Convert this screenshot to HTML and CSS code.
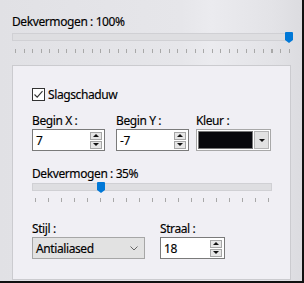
FILE: index.html
```html
<!DOCTYPE html>
<html lang="nl">
<head>
  <meta charset="UTF-8">
  <meta name="viewport" content="width=device-width, initial-scale=1.0">
  <title>Slagschaduw</title>
  <link rel="stylesheet" href="styles.css">
</head>
<body>

  <div class="window">

    <!-- Layer opacity -->
    <div class="top">
      <div class="label">Dekvermogen : 100%</div>
      <div class="slider slider-main">
        <div class="track"></div>
        <div class="thumb" style="left: 273px;"></div>
        <div class="ticks"></div>
      </div>
    </div>

    <!-- Drop shadow group -->
    <div class="panel">
      <label class="check">
        <span class="box">
          <svg width="11" height="11" viewBox="0 0 11 11"><path d="M1.5 5.5 L4.2 8.2 L9.5 2.2" fill="none" stroke="#333" stroke-width="1.1"/></svg>
        </span>
        Slagschaduw
      </label>

      <div class="row">
        <div class="field field-x">
          <div class="label">Begin X :</div>
          <div class="spin spin-wide">
            <span class="value">7</span>
            <span class="arrows"><span class="arrow up"></span><span class="arrow down"></span></span>
          </div>
        </div>
        <div class="field field-y">
          <div class="label">Begin Y :</div>
          <div class="spin spin-wide">
            <span class="value">-7</span>
            <span class="arrows"><span class="arrow up"></span><span class="arrow down"></span></span>
          </div>
        </div>
        <div class="field">
          <div class="label">Kleur :</div>
          <div class="color-combo">
            <span class="swatch"></span>
            <span class="combo-btn"></span>
          </div>
        </div>
      </div>

      <div class="label label-opacity">Dekvermogen : 35%</div>
      <div class="slider slider-inner">
        <div class="track"></div>
        <div class="thumb" style="left: 65px;"></div>
        <div class="ticks"></div>
      </div>

      <div class="row row-bottom">
        <div class="field field-style">
          <div class="label">Stijl :</div>
          <div class="select">
            <span class="value">Antialiased</span>
            <svg width="8" height="5" viewBox="0 0 8 5"><path d="M0.5 0.5 L4 4 L7.5 0.5" fill="none" stroke="#666" stroke-width="1"/></svg>
          </div>
        </div>
        <div class="field">
          <div class="label">Straal :</div>
          <div class="spin spin-small">
            <span class="value">18</span>
            <span class="arrows"><span class="arrow up"></span><span class="arrow down"></span></span>
          </div>
        </div>
      </div>
    </div>

  </div>

</body>
</html>
```

FILE: styles.css
```css
body {
  margin: 0;
  font-family: "Noto Sans", "Open Sans", sans-serif;
  font-size: 12px;
  letter-spacing: -0.4px;
  color: #000;
  -webkit-text-stroke: 0.15px #000;
  background: #e4e4e8;
}
.window {
  width: 304px;
  height: 283px;
  box-sizing: border-box;
  border-right: 2px solid #111;
  border-bottom: 2px solid #111;
  background: linear-gradient(90deg, #e1e1e5 0%, #e6e6ea 60%, #ebebef 70%, #e3e3e7 90%, #dcdce0 100%);
  overflow: hidden;
}
.label {
  line-height: 16px;
  height: 16px;
}
.top {
  padding: 14px 0 0 12px;
}
/* Slider */
.slider {
  position: relative;
}
.track {
  height: 6px;
  border: 1px solid #d0d0d4;
  background: #dedee1;
}
.ticks {
  height: 4px;
  background: repeating-linear-gradient(90deg, #a8a8a8 0, #a8a8a8 1px, transparent 1px, transparent 8.55px);
}
.thumb {
  position: absolute;
  top: -1px;
  width: 8px;
  height: 8px;
  background: #0078d7;
  border-radius: 1px 1px 0 0;
}
.thumb::after {
  content: "";
  position: absolute;
  left: 0;
  top: 8px;
  border-left: 4px solid transparent;
  border-right: 4px solid transparent;
  border-top: 3px solid #0078d7;
}
.slider-main {
  width: 278px;
  margin-top: 3px;
}
.slider-main .ticks {
  margin: 8px 0 0 3px;
  width: 275px;
}
.slider-inner {
  width: 240px;
  margin-top: 1px;
}
.slider-inner .ticks {
  margin: 7px 0 0 3px;
  width: 234px;
  background: repeating-linear-gradient(90deg, #a8a8a8 0, #a8a8a8 1px, transparent 1px, transparent 12.96px);
}
/* Group panel */
.panel {
  margin: 12px 0 0 12px;
  width: 279px;
  height: 215px;
  box-sizing: border-box;
  border: 1px solid #cbcbcf;
  background: #f0eff4;
  padding: 22px 0 0 19px;
}
.check {
  display: flex;
  align-items: center;
  gap: 3px;
  height: 13px;
}
.box {
  width: 11px;
  height: 11px;
  border: 1px solid #333;
  background: #fff;
  display: flex;
}
.row {
  display: flex;
  margin-top: 12px;
}
.field-x {
  width: 84px;
}
.field-y {
  width: 80px;
}
.label-opacity {
  margin-top: 15px;
}
.row-bottom {
  margin-top: 19px;
}
.field-style {
  width: 128px;
}
/* Spin box */
.spin {
  height: 22px;
  box-sizing: border-box;
  border: 1px solid #7a7a7a;
  background: #fff;
  display: flex;
  align-items: center;
  justify-content: space-between;
  padding: 0 2px 0 3px;
}
.spin-wide {
  width: 73px;
}
.spin-small {
  width: 65px;
}
.arrows {
  display: flex;
  flex-direction: column;
  gap: 1px;
}
.arrow {
  width: 12px;
  height: 8px;
  box-sizing: border-box;
  border: 1px solid #a6a6a6;
  background: #e6e6e6;
  display: flex;
  align-items: center;
  justify-content: center;
}
.arrow::before {
  content: "";
  border-left: 3px solid transparent;
  border-right: 3px solid transparent;
}
.arrow.up::before {
  border-bottom: 3px solid #111;
}
.arrow.down::before {
  border-top: 3px solid #111;
}
/* Colour combo */
.color-combo {
  width: 75px;
  height: 22px;
  box-sizing: border-box;
  border: 1px solid #a8a8a8;
  background: #fff;
  display: flex;
  align-items: center;
  gap: 1px;
  padding: 1px;
}
.swatch {
  width: 56px;
  height: 18px;
  box-sizing: border-box;
  border: 1px solid #777;
  background: #09090d;
}
.combo-btn {
  width: 15px;
  height: 18px;
  box-sizing: border-box;
  border: 1px solid #b4b4b4;
  background: #e2e2e2;
  display: flex;
  align-items: center;
  justify-content: center;
}
.combo-btn::before {
  content: "";
  border-left: 3px solid transparent;
  border-right: 3px solid transparent;
  border-top: 3px solid #111;
}
/* Select */
.select {
  width: 113px;
  height: 22px;
  box-sizing: border-box;
  border: 1px solid #a6a6a6;
  background: #e2e2e2;
  display: flex;
  align-items: center;
  justify-content: space-between;
  padding: 0 6px 0 3px;
}
```
